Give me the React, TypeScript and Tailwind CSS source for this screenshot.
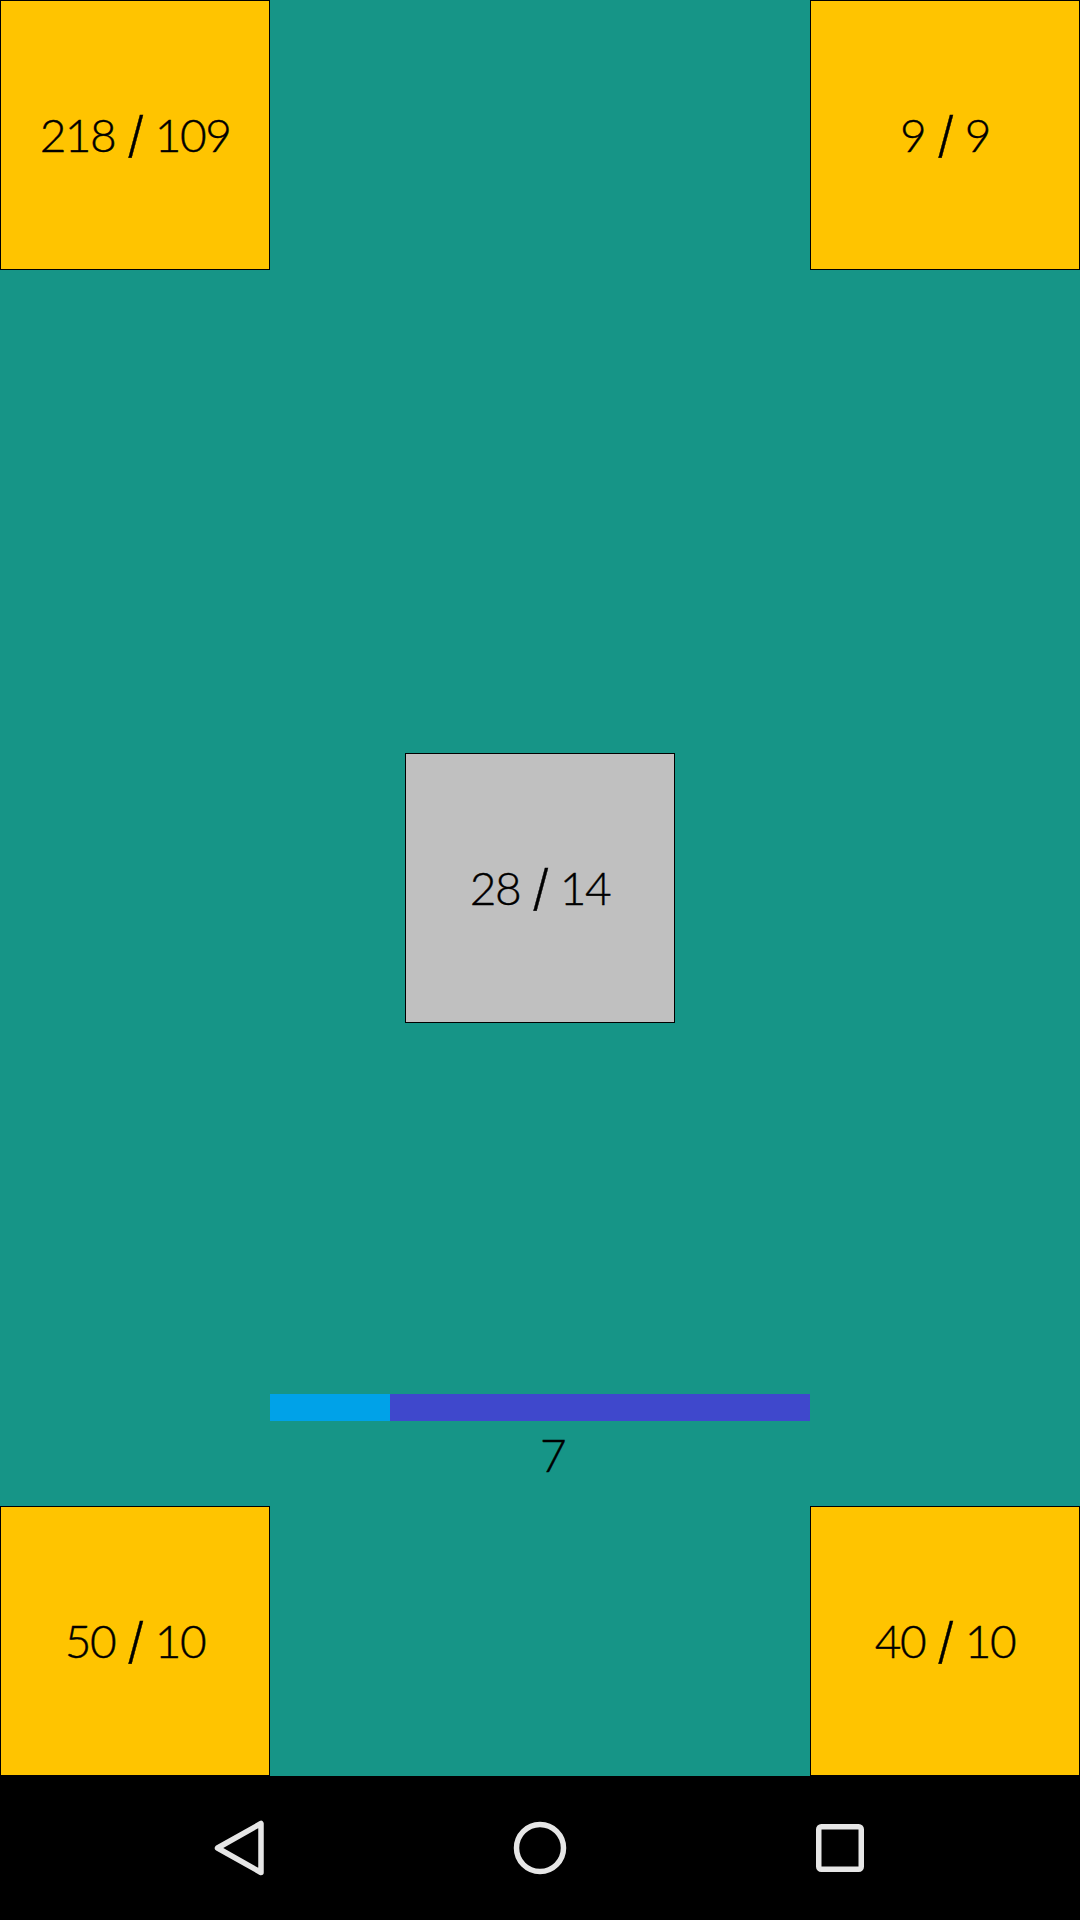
import React from 'react';

const textFont = "font-['Lato',sans-serif] font-light text-[46px] tracking-[-1.5px] [word-spacing:1px] [-webkit-text-stroke:0.4px_black] text-black";

const Slash: React.FC = () => <span className="font-['Inter',sans-serif] font-light text-[49px] leading-none">/</span>;

const StatBox: React.FC<{ left: number; right: number; color?: string }> = ({ left, right, color = 'bg-[#ffc400]' }) => (
  <div className={`w-[270px] h-[270px] border border-black pb-[2px] flex items-center justify-center whitespace-pre ${color} ${textFont}`}>
    <span>
      {left} <Slash /> {right}
    </span>
  </div>
);

const NavIcon: React.FC<{ children: React.ReactNode }> = ({ children }) => (
  <div className="w-[300px] flex items-center justify-center">
    <svg width="60" height="60" viewBox="0 0 60 60" fill="none" stroke="#e6e6e6" strokeWidth="5.5" strokeLinejoin="round">
      {children}
    </svg>
  </div>
);

export default function App() {
  return (
    <div className="w-[1080px] h-[1920px] flex flex-col bg-black overflow-hidden">
      <div className="h-[1776px] bg-[#169587] flex flex-col">
        <div className="flex justify-between">
          <StatBox left={218} right={109} />
          <StatBox left={9} right={9} />
        </div>
        <div className="flex justify-center mt-[483px]">
          <StatBox left={28} right={14} color="bg-[#c0c0c0]" />
        </div>
        <div className="w-[540px] mx-auto mt-[371px]">
          <div className="h-[27px] bg-[#3f48cc]">
            <div className="w-[120px] h-full bg-[#00a2e8]" />
          </div>
          <div className={`pl-[270px] mt-[9px] h-[50px] leading-[50px] ${textFont}`}>7</div>
        </div>
        <div className="flex justify-between mt-auto">
          <StatBox left={50} right={10} />
          <StatBox left={40} right={10} />
        </div>
      </div>
      <div className="h-[144px] bg-black flex justify-center items-center">
        <NavIcon>
          <path d="M7.5 30 L 51 5.5 V 54.5 Z" />
        </NavIcon>
        <NavIcon>
          <circle cx="30" cy="30" r="23.5" />
        </NavIcon>
        <NavIcon>
          <rect x="8.75" y="8.75" width="42.5" height="42.5" rx="2.5" />
        </NavIcon>
      </div>
    </div>
  );
}
